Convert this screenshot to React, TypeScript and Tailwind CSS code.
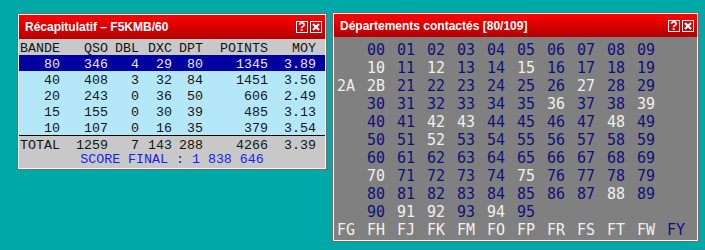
const bands = [
  { b: '80', qso: '346', dbl: '4', dxc: '29', dpt: '80', pts: '1345', moy: '3.89' },
  { b: '40', qso: '408', dbl: '3', dxc: '32', dpt: '84', pts: '1451', moy: '3.56' },
  { b: '20', qso: '243', dbl: '0', dxc: '36', dpt: '50', pts: '606', moy: '2.49' },
  { b: '15', qso: '155', dbl: '0', dxc: '30', dpt: '39', pts: '485', moy: '3.13' },
  { b: '10', qso: '107', dbl: '0', dxc: '16', dpt: '35', pts: '379', moy: '3.54' },
];

// departments not yet worked are drawn in white
const missing = new Set([
  '10', '12', '15', '2A', '2B', '27', '36', '39', '42', '43', '48', '52',
  '70', '75', '88', '91', '92', '94', 'FG', 'FH', 'FJ', 'FK', 'FM', 'FO',
  'FP', 'FR', 'FS', 'FT', 'FW',
]);

const deptRows: string[][] = [];
for (let r = 0; r < 10; r++) {
  const row = [''];
  for (let c = 0; c < 10; c++) row.push(`${r}${c}`);
  deptRows.push(row);
}
deptRows[2][0] = '2A';
deptRows[2][1] = '2B';
deptRows[9] = ['', '90', '91', '92', '93', '94', '95'];
deptRows.push(['FG', 'FH', 'FJ', 'FK', 'FM', 'FO', 'FP', 'FR', 'FS', 'FT', 'FW', 'FY']);

const cols = 'grid grid-cols-[40px_48px_31px_33px_31px_65px_48px] pl-[1px] h-4 items-center';

function TitleButtons() {
  return (
    <div className="flex gap-[2px] pr-[3px]">
      <span className="w-[12px] h-[12px] border border-white flex items-center justify-center text-white text-[12px] font-black leading-none font-['Liberation_Sans',Arial,sans-serif]">?</span>
      <span className="w-[12px] h-[12px] border border-white flex items-center justify-center">
        <svg width="8" height="8" viewBox="0 0 8 8">
          <path d="M1 1 L7 7 M7 1 L1 7" stroke="white" strokeWidth="2.2" />
        </svg>
      </span>
    </div>
  );
}

function Window({ title, className, titleH, children }: { title: string; className: string; titleH: string; children: React.ReactNode }) {
  return (
    <div className={`absolute border border-[#6e6e6e] ${className}`}>
      <div className="border border-[#f4f4f4] h-full flex flex-col">
        <div className={`${titleH} shrink-0 flex items-center justify-between bg-gradient-to-b from-[#ff0000] to-[#b40000]`}>
          <span className="pl-[6px] text-white text-[12px] font-bold font-['Liberation_Sans',Arial,sans-serif]">{title}</span>
          <TitleButtons />
        </div>
        {children}
      </div>
    </div>
  );
}

export default function App() {
  return (
    <div className="relative w-[705px] h-[250px] bg-[#00a8a8] overflow-hidden">
      <Window title="Récapitulatif – F5KMB/60" className="left-[17px] top-[13px] w-[310px] h-[157px]" titleH="h-6">
        <div className="flex-1 bg-[#c8c8c8] font-['Liberation_Mono','Courier_New',monospace] text-[13.3px] text-[#141414]">
          <div className={cols}>
            <span>BANDE</span>
            <span className="text-right">QSO</span>
            <span className="text-right">DBL</span>
            <span className="text-right">DXC</span>
            <span className="text-right">DPT</span>
            <span className="text-right">POINTS</span>
            <span className="text-right">MOY</span>
          </div>
          {bands.map((r, i) => (
            <div key={r.b} className={`${cols} ${i === 0 ? 'bg-[#0000a0] text-[#e8e8f8]' : 'bg-[#b4e8f8]'}`}>
              <span className="text-right">{r.b}</span>
              <span className="text-right">{r.qso}</span>
              <span className="text-right">{r.dbl}</span>
              <span className="text-right">{r.dxc}</span>
              <span className="text-right">{r.dpt}</span>
              <span className="text-right">{r.pts}</span>
              <span className="text-right">{r.moy}</span>
            </div>
          ))}
          <div className="border-t border-black" />
          <div className={cols}>
            <span>TOTAL</span>
            <span className="text-right">1259</span>
            <span className="text-right">7</span>
            <span className="text-right">143</span>
            <span className="text-right">288</span>
            <span className="text-right">4266</span>
            <span className="text-right">3.39</span>
          </div>
          <div className="h-4 flex items-center justify-center text-[#1a1aff]">SCORE FINAL : 1 838 646</div>
        </div>
      </Window>

      <Window title="Départements contactés [80/109]" className="left-[332px] top-[12px] w-[367px] h-[230px]" titleH="h-[23px]">
        <div className="flex-1 bg-[#808080] pt-1 pl-[3px] font-['DejaVu_Sans_Mono',monospace] text-[15px] leading-[18px]">
          {deptRows.map((row, r) => (
            <div key={r} className="grid grid-cols-[repeat(12,30px)]">
              {row.map((d, c) => (
                <span key={c} className={missing.has(d) ? 'text-[#f0f0f0]' : 'text-[#10107c]'}>{d}</span>
              ))}
            </div>
          ))}
        </div>
      </Window>
    </div>
  );
}
